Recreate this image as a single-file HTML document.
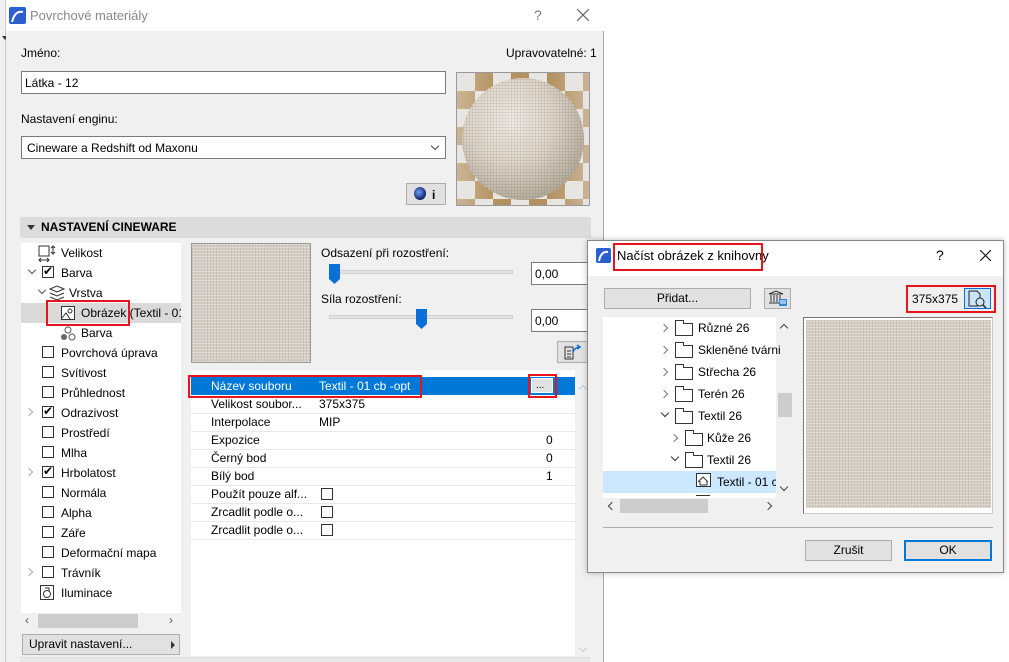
<!DOCTYPE html>
<html><head><meta charset="utf-8"><style>
*{box-sizing:border-box;margin:0;padding:0}
body{width:1009px;height:662px;position:relative;overflow:hidden;background:#fff;font-family:"Liberation Sans",sans-serif;font-size:12px;color:#000}
.a{position:absolute}
.t{position:absolute;white-space:nowrap;line-height:14px}
.box{position:absolute;background:#fff;border:1px solid #7a7a7a}
.btn{position:absolute;background:#e1e1e1;border:1px solid #adadad;text-align:center}
.cb{position:absolute;width:12px;height:12px;border:1px solid #333;background:#fff}
.red{position:absolute;border:2px solid #e8141c}
.tex{background-color:#d3cdc3;background-image:repeating-linear-gradient(0deg,rgba(255,255,255,.3) 0 1px,transparent 1px 3px),repeating-linear-gradient(90deg,rgba(130,120,105,.18) 0 1px,transparent 1px 3px)}
.chev{position:absolute;width:6px;height:6px;border-right:1.5px solid #555;border-bottom:1.5px solid #555}
.fold{position:absolute;width:18px;height:13px;border:1px solid #333;background:#fff}
.fold:before{content:"";position:absolute;left:-1px;top:-4px;width:7px;height:3px;border:1px solid #333;border-bottom:none;background:#fff}
</style></head><body>
<div class="a" style="left:0;top:0;width:6px;height:662px;background:#f0f0f0;border-right:1px solid #ccc"></div>
<div class="a" style="left:2px;top:36px;border-left:3px solid transparent;border-right:3px solid transparent;border-top:4px solid #333"></div>
<div class="a" style="left:6px;top:0;width:598px;height:662px;background:#f0f0f0;border-right:1px solid #aaa"></div>
<div class="a" style="left:6px;top:0;width:598px;height:31px;background:#fff"></div>
<svg class="a" style="left:9px;top:7px" width="17" height="17"><rect width="17" height="17" rx="2" fill="#2b5fd0"/><path d="M3 15 Q6 3 14 5" stroke="#fff" stroke-width="2" fill="none"/></svg>
<div class="t" style="left:30px;top:9px;font-size:13px;color:#888">Povrchové materiály</div>
<div class="t" style="left:534px;top:8px;font-size:14px;color:#777">?</div>
<svg class="a" style="left:577px;top:9px" width="12" height="12"><path d="M0 0L12 12M12 0L0 12" stroke="#666" stroke-width="1.2"/></svg>
<div class="t" style="left:21px;top:46px">Jméno:</div>
<div class="t" style="left:506px;top:46px">Upravovatelné: 1</div>
<div class="box" style="left:21px;top:71px;width:425px;height:23px"></div>
<div class="t" style="left:25px;top:76px">Látka - 12</div>
<div class="t" style="left:21px;top:112px">Nastavení enginu:</div>
<div class="box" style="left:21px;top:136px;width:425px;height:23px"></div>
<div class="t" style="left:27px;top:141px">Cineware a Redshift od Maxonu</div>
<div class="chev" style="left:432px;top:143px;transform:rotate(45deg);border-color:#444;border-width:1px"></div>
<div class="btn" style="left:406px;top:183px;width:40px;height:22px"></div>
<div class="a" style="left:414px;top:187px;width:12px;height:13px;border-radius:50%;background:radial-gradient(circle at 40% 40%,#6aa0ff,#102060 70%)"></div>
<div class="t" style="left:432px;top:188px;font-weight:bold">i</div>
<div class="a" style="left:456px;top:72px;width:134px;height:134px;border:1px solid #999;overflow:hidden;background:conic-gradient(#a87b3e 25%,#e8e6e2 0 50%,#a87b3e 0 75%,#e8e6e2 0) 0 0/36px 36px"></div>
<div class="a" style="left:457px;top:73px;width:132px;height:132px;background:linear-gradient(90deg,rgba(230,228,224,.55),rgba(230,228,224,.2) 30%,rgba(230,228,224,.2) 70%,rgba(230,228,224,.55))"></div>
<div class="a" style="left:462px;top:78px;width:122px;height:122px;border-radius:50%;background:radial-gradient(circle at 40% 35%,#f3efe8,#e0d9cd 40%,#b8ae9e 75%,#8a8070)"></div>
<div class="a" style="left:462px;top:78px;width:122px;height:122px;border-radius:50%;background-image:radial-gradient(rgba(90,80,70,.35) 0.8px,transparent 1.2px);background-size:3px 3px;opacity:.7"></div>
<div class="a" style="left:20px;top:217px;width:571px;height:21px;background:#dcdcdc;border-radius:2px"></div>
<div class="a" style="left:27px;top:225px;border-left:4px solid transparent;border-right:4px solid transparent;border-top:5px solid #333"></div>
<div class="t" style="left:41px;top:220px;font-weight:bold">NASTAVENÍ CINEWARE</div>
<div class="a" style="left:21px;top:243px;width:160px;height:370px;background:#fff;overflow:hidden">
<div class="a" style="left:0;top:60px;width:160px;height:20px;background:#dadada"></div>
<div class="t" style="left:60px;top:63px">Obrázek (Textil - 01</div>
</div>
<svg class="a" style="left:38px;top:245px" width="20" height="18"><rect x="1" y="1" width="10" height="10" fill="none" stroke="#333"/><path d="M15 1v8M13 3l2-2 2 2M13 7l2 2 2-2M1 15h10M3 13l-2 2 2 2M9 13l2 2-2 2" stroke="#333" fill="none"/></svg>
<div class="t" style="left:61px;top:246px">Velikost</div>
<div class="chev" style="left:29px;top:267px;transform:rotate(45deg)"></div>
<div class="cb" style="left:42px;top:266px"></div><div class="t" style="left:43px;top:264px;font-size:12px">✔</div>
<div class="t" style="left:61px;top:266px">Barva</div>
<div class="chev" style="left:39px;top:287px;transform:rotate(45deg)"></div>
<svg class="a" style="left:49px;top:285px" width="16" height="16"><path d="M1 4l7-3 7 3-7 3z M1 8l7 3 7-3 M1 12l7 3 7-3" fill="none" stroke="#333"/></svg>
<div class="t" style="left:69px;top:286px">Vrstva</div>
<svg class="a" style="left:61px;top:306px" width="14" height="14"><rect x=".5" y=".5" width="13" height="13" fill="#fff" stroke="#333"/><circle cx="9" cy="5" r="2" fill="none" stroke="#333"/><path d="M1 12l4-5 4 6" fill="none" stroke="#333"/></svg>
<div class="red" style="left:46px;top:300px;width:84px;height:26px"></div>
<svg class="a" style="left:60px;top:326px" width="16" height="15"><circle cx="8" cy="4" r="3" fill="none" stroke="#555"/><circle cx="4" cy="11" r="3" fill="#666"/><circle cx="12" cy="11" r="3" fill="none" stroke="#555"/></svg>
<div class="t" style="left:81px;top:326px">Barva</div>
<div class="cb" style="left:42px;top:346px"></div><div class="t" style="left:61px;top:346px">Povrchová úprava</div>
<div class="cb" style="left:42px;top:366px"></div><div class="t" style="left:61px;top:366px">Svítivost</div>
<div class="cb" style="left:42px;top:386px"></div><div class="t" style="left:61px;top:386px">Průhlednost</div>
<div class="chev" style="left:26px;top:409px;transform:rotate(-45deg);border-color:#aaa"></div>
<div class="cb" style="left:42px;top:406px"></div><div class="t" style="left:43px;top:404px">✔</div><div class="t" style="left:61px;top:406px">Odrazivost</div>
<div class="cb" style="left:42px;top:426px"></div><div class="t" style="left:61px;top:426px">Prostředí</div>
<div class="cb" style="left:42px;top:446px"></div><div class="t" style="left:61px;top:446px">Mlha</div>
<div class="chev" style="left:26px;top:469px;transform:rotate(-45deg);border-color:#aaa"></div>
<div class="cb" style="left:42px;top:466px"></div><div class="t" style="left:43px;top:464px">✔</div><div class="t" style="left:61px;top:466px">Hrbolatost</div>
<div class="cb" style="left:42px;top:486px"></div><div class="t" style="left:61px;top:486px">Normála</div>
<div class="cb" style="left:42px;top:506px"></div><div class="t" style="left:61px;top:506px">Alpha</div>
<div class="cb" style="left:42px;top:526px"></div><div class="t" style="left:61px;top:526px">Záře</div>
<div class="cb" style="left:42px;top:546px"></div><div class="t" style="left:61px;top:546px">Deformační mapa</div>
<div class="chev" style="left:26px;top:569px;transform:rotate(-45deg);border-color:#aaa"></div>
<div class="cb" style="left:42px;top:566px"></div><div class="t" style="left:61px;top:566px">Trávník</div>
<svg class="a" style="left:40px;top:584px" width="14" height="16"><rect x=".5" y="1.5" width="13" height="14" fill="none" stroke="#333"/><circle cx="7" cy="10" r="3.5" fill="none" stroke="#333"/><path d="M5 4h4v3" stroke="#333" fill="none"/></svg>
<div class="t" style="left:61px;top:586px">Iluminace</div>
<div class="a" style="left:38px;top:614px;width:100px;height:14px;background:#cdcdcd"></div>
<div class="t" style="left:25px;top:613px;color:#555">‹</div><div class="t" style="left:169px;top:613px;color:#555">›</div>
<div class="btn" style="left:22px;top:634px;width:158px;height:21px;text-align:left;padding-left:6px;line-height:19px">Upravit nastavení...</div>
<div class="a" style="left:171px;top:641px;border-top:4px solid transparent;border-bottom:4px solid transparent;border-left:4px solid #333"></div>
<div class="a" style="left:191px;top:243px;width:384px;height:413px;background:#fff"></div>
<div class="a" style="left:183px;top:243px;width:407px;height:127px;background:#f0f0f0"></div>
<div class="a tex" style="left:191px;top:243px;width:120px;height:120px;border:1px solid #999"></div>
<div class="t" style="left:321px;top:246px">Odsazení při rozostření:</div>
<div class="a" style="left:329px;top:270px;width:184px;height:4px;background:#e3e3e3;border:1px solid #d0d0d0"></div>
<svg class="a" style="left:329px;top:264px" width="11" height="20"><path d="M0 0h11v15l-5.5 5-5.5-5z" fill="#0a6fd6"/></svg>
<div class="box" style="left:531px;top:262px;width:60px;height:23px"></div><div class="t" style="left:535px;top:267px">0,00</div>
<div class="t" style="left:321px;top:292px">Síla rozostření:</div>
<div class="a" style="left:329px;top:315px;width:184px;height:4px;background:#e3e3e3;border:1px solid #d0d0d0"></div>
<div class="a" style="left:416px;top:309px"><svg width="11" height="20"><path d="M0 0h11v15l-5.5 5-5.5-5z" fill="#0a6fd6"/></svg></div>
<div class="box" style="left:531px;top:309px;width:60px;height:23px"></div><div class="t" style="left:535px;top:314px">0,00</div>
<div class="btn" style="left:557px;top:341px;width:33px;height:22px"></div>
<svg class="a" style="left:564px;top:344px" width="18" height="16"><path d="M1 3h8v12H1z M3 7h4M3 10h4M3 13h4" fill="none" stroke="#333"/><path d="M9 8q2-5 7-5M13 1l3 2-3 2" fill="none" stroke="#0a6fd6" stroke-width="1.5"/></svg>
<div class="a" style="left:191px;top:377px;width:384px;height:18px;background:#0078d7"></div>
<div class="t" style="left:211px;top:379px;color:#fff">Název souboru</div>
<div class="t" style="left:319px;top:379px;color:#fff">Textil - 01 cb -opt</div>
<div class="a" style="left:531px;top:378px;width:22px;height:15px;background:#e1e1e1;border:1px solid #fff"></div><div class="t" style="left:536px;top:379px;font-size:10px">...</div>
<div class="red" style="left:188px;top:375px;width:234px;height:23px"></div>
<div class="red" style="left:528px;top:374px;width:29px;height:24px"></div>
<div class="t" style="left:211px;top:397px">Velikost soubor...</div><div class="t" style="left:319px;top:397px">375x375</div>
<div class="t" style="left:211px;top:415px">Interpolace</div><div class="t" style="left:319px;top:415px">MIP</div>
<div class="t" style="left:211px;top:433px">Expozice</div><div class="t" style="left:546px;top:433px">0</div>
<div class="t" style="left:211px;top:451px">Černý bod</div><div class="t" style="left:546px;top:451px">0</div>
<div class="t" style="left:211px;top:469px">Bílý bod</div><div class="t" style="left:546px;top:469px">1</div>
<div class="t" style="left:211px;top:487px">Použít pouze alf...</div><div class="cb" style="left:321px;top:488px"></div>
<div class="t" style="left:211px;top:505px">Zrcadlit podle o...</div><div class="cb" style="left:321px;top:506px"></div>
<div class="t" style="left:211px;top:523px">Zrcadlit podle o...</div><div class="cb" style="left:321px;top:524px"></div>
<div class="a" style="left:191px;top:413px;width:384px;border-top:1px solid #e8e8e8"></div>
<div class="a" style="left:191px;top:431px;width:384px;border-top:1px solid #e8e8e8"></div>
<div class="a" style="left:191px;top:449px;width:384px;border-top:1px solid #e8e8e8"></div>
<div class="a" style="left:191px;top:467px;width:384px;border-top:1px solid #e8e8e8"></div>
<div class="a" style="left:191px;top:485px;width:384px;border-top:1px solid #e8e8e8"></div>
<div class="a" style="left:191px;top:503px;width:384px;border-top:1px solid #e8e8e8"></div>
<div class="a" style="left:191px;top:521px;width:384px;border-top:1px solid #e8e8e8"></div>
<div class="a" style="left:191px;top:539px;width:384px;border-top:1px solid #e8e8e8"></div>
<div class="chev" style="left:580px;top:386px;transform:rotate(-135deg);border-color:#ccc;border-width:1px"></div>
<div class="chev" style="left:580px;top:645px;transform:rotate(45deg);border-color:#ccc;border-width:1px"></div>
<div class="a" style="left:20px;top:657px;width:570px;height:5px;border-top:1px solid #ddd;background:#e8e8e8"></div>

<div class="a" style="left:587px;top:240px;width:417px;height:333px;background:#f0f0f0;border:1px solid #888;box-shadow:0 0 6px rgba(0,0,0,.25)"></div>
<div class="a" style="left:588px;top:241px;width:415px;height:35px;background:#fff"></div>
<svg class="a" style="left:596px;top:248px" width="15" height="15"><rect width="15" height="15" rx="2" fill="#2b5fd0"/><path d="M3 13 Q5 3 12 4" stroke="#fff" stroke-width="2" fill="none"/></svg>
<div class="t" style="left:617px;top:249px;font-size:13px">Načíst obrázek z knihovny</div>
<div class="red" style="left:613px;top:243px;width:150px;height:28px"></div>
<div class="t" style="left:936px;top:248px;font-size:14px">?</div>
<svg class="a" style="left:980px;top:250px" width="11" height="11"><path d="M0 0L11 11M11 0L0 11" stroke="#222" stroke-width="1.2"/></svg>
<div class="btn" style="left:604px;top:288px;width:147px;height:21px;line-height:19px">Přidat...</div>
<div class="btn" style="left:764px;top:288px;width:27px;height:21px"></div>
<svg class="a" style="left:768px;top:290px" width="20" height="17"><path d="M1 4l7-3 7 3z M3 5v7M6 5v7M9 5v7M12 5v7M1 13h14" fill="none" stroke="#333"/><rect x="11" y="9" width="8" height="7" fill="#2f86e0"/><path d="M12 11h6M12 13h6" stroke="#fff"/></svg>
<div class="t" style="left:912px;top:292px">375x375</div>
<div class="a" style="left:964px;top:288px;width:27px;height:21px;background:#cce4f7;border:1px solid #0a6fd6"></div>
<svg class="a" style="left:968px;top:290px" width="20" height="18"><path d="M1 1h8l3 3v4M1 1v15h9" fill="none" stroke="#222"/><circle cx="12" cy="12" r="4" fill="none" stroke="#222"/><path d="M15 15l3 3" stroke="#222" stroke-width="1.5"/></svg>
<div class="red" style="left:906px;top:285px;width:90px;height:28px"></div>
<div class="a" style="left:603px;top:317px;width:173px;height:181px;background:#fff;overflow:hidden">
<div class="a" style="left:0;top:154px;width:173px;height:22px;background:#cce8ff"></div>
</div>
<div class="chev" style="left:661px;top:325px;transform:rotate(-45deg);border-color:#777"></div><div class="fold" style="left:675px;top:323px"></div><div class="t" style="left:698px;top:321px">Různé 26</div>
<div class="chev" style="left:661px;top:347px;transform:rotate(-45deg);border-color:#777"></div><div class="fold" style="left:675px;top:345px"></div><div class="t" style="left:698px;top:343px">Skleněné tvárni</div>
<div class="chev" style="left:661px;top:369px;transform:rotate(-45deg);border-color:#777"></div><div class="fold" style="left:675px;top:367px"></div><div class="t" style="left:698px;top:365px">Střecha 26</div>
<div class="chev" style="left:661px;top:391px;transform:rotate(-45deg);border-color:#777"></div><div class="fold" style="left:675px;top:389px"></div><div class="t" style="left:698px;top:387px">Terén 26</div>
<div class="chev" style="left:662px;top:410px;transform:rotate(45deg);border-color:#333"></div><div class="fold" style="left:675px;top:411px"></div><div class="t" style="left:698px;top:409px">Textil 26</div>
<div class="chev" style="left:671px;top:435px;transform:rotate(-45deg);border-color:#777"></div><div class="fold" style="left:685px;top:433px"></div><div class="t" style="left:707px;top:431px">Kůže 26</div>
<div class="chev" style="left:672px;top:454px;transform:rotate(45deg);border-color:#333"></div><div class="fold" style="left:685px;top:455px"></div><div class="t" style="left:707px;top:453px">Textil 26</div>
<svg class="a" style="left:696px;top:473px" width="15" height="14"><rect x=".5" y=".5" width="14" height="13" fill="#fff" stroke="#333"/><path d="M2 9l5-5 5 5M4 8v4h7V8" fill="none" stroke="#333"/></svg>
<div class="t" style="left:717px;top:475px;width:59px;overflow:hidden">Textil - 01 cb</div>
<div class="a" style="left:696px;top:495px;width:14px;height:3px;border-top:1px solid #333"></div>
<div class="chev" style="left:781px;top:325px;transform:rotate(-135deg);border-color:#444"></div>
<div class="chev" style="left:781px;top:484px;transform:rotate(45deg);border-color:#444"></div>
<div class="a" style="left:778px;top:393px;width:14px;height:24px;background:#cdcdcd"></div>
<div class="a" style="left:620px;top:499px;width:88px;height:14px;background:#cdcdcd"></div>
<div class="chev" style="left:609px;top:503px;transform:rotate(135deg);border-color:#444"></div>
<div class="chev" style="left:765px;top:503px;transform:rotate(-45deg);border-color:#444"></div>
<div class="a" style="left:803px;top:317px;width:190px;height:197px;background:#fff;border:1px solid #ccc;border-left-color:#777;border-top-color:#777"></div>
<div class="a tex" style="left:806px;top:320px;width:185px;height:188px"></div>
<div class="a" style="left:603px;top:527px;width:390px;border-top:1px solid #aaa"></div>
<div class="btn" style="left:805px;top:540px;width:87px;height:21px;line-height:19px">Zrušit</div>
<div class="btn" style="left:904px;top:540px;width:88px;height:21px;line-height:17px;border:2px solid #0078d7">OK</div>
</body></html>
